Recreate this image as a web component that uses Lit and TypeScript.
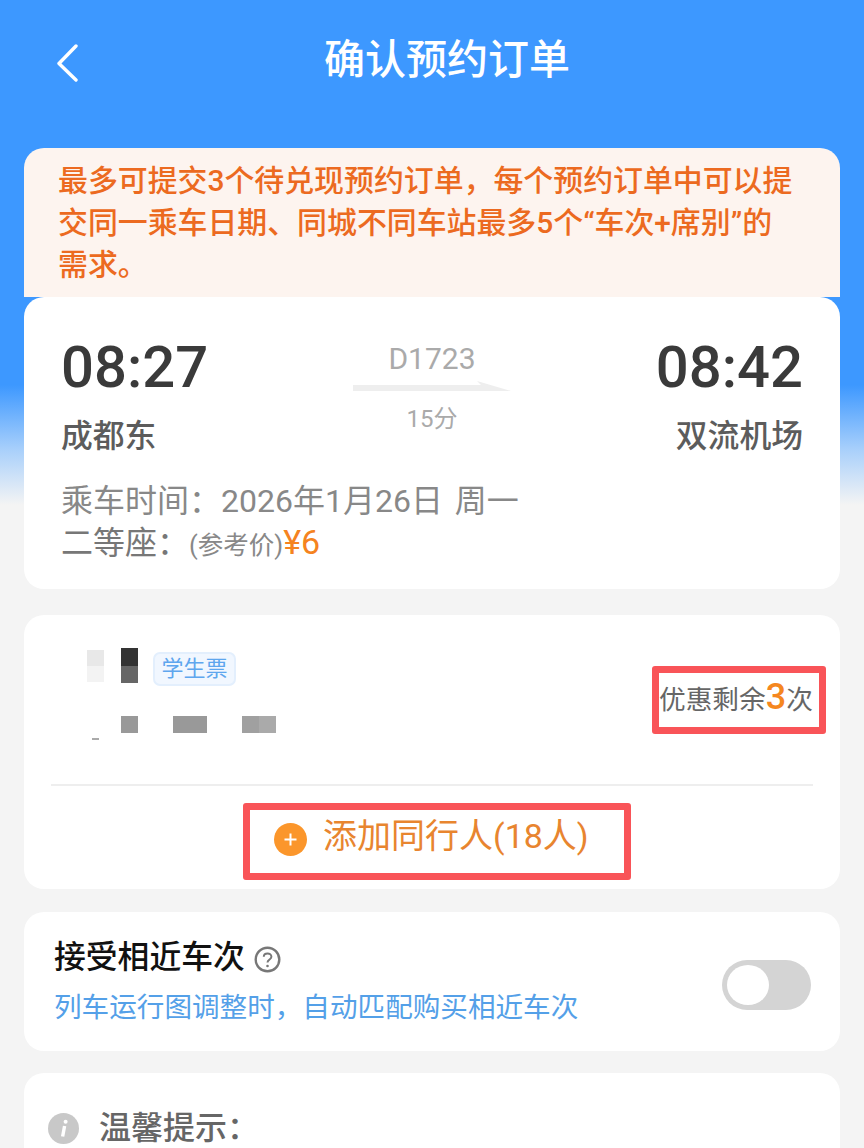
import { LitElement, html, css } from 'lit';
import { customElement } from 'lit/decorators.js';

@customElement('app-root')
export class AppRoot extends LitElement {
  static styles = css`
    :host {
      display: block;
      height: 1148px;
      overflow: hidden;
      font-family: Roboto, "Noto Sans CJK SC", sans-serif;
      background: linear-gradient(to bottom, #3d98ff 0, #3d98ff 385px, #a9d0fb 450px, #f4f4f4 505px);
    }

    .nav {
      height: 148px;
      box-sizing: border-box;
      padding: 33px 0 0 30px;
      position: relative;
      text-align: center;
      color: #fff;
      font-size: 41px;
      line-height: 54px;
      font-weight: 500;
    }

    .back {
      position: absolute;
      left: 56px;
      top: 44px;
      width: 24px;
      height: 38px;
    }

    .body {
      padding: 0 24px;
    }

    .notice {
      background: #fdf4ef;
      border-radius: 20px 20px 0 0;
      height: 149px;
      box-sizing: border-box;
      padding: 12px 45px 0 34px;
      color: #ec6a20;
      font-size: 29.9px;
      line-height: 42px;
      font-weight: 500;
    }

    .card {
      background: #fff;
      border-radius: 20px;
      box-sizing: border-box;
    }

    .ticket {
      height: 292px;
      padding: 34px 37px 0 37px;
    }

    .route {
      display: flex;
      justify-content: space-between;
    }

    .stop {
      width: 200px;
    }

    .stop.end {
      text-align: right;
    }

    .time {
      font-size: 58px;
      line-height: 72px;
      color: #3a3a3a;
      font-weight: 500;
    }

    .station {
      font-size: 31.8px;
      line-height: 44px;
      margin-top: 11px;
      color: #5c5c5c;
      font-weight: 500;
    }

    .train {
      display: flex;
      flex-direction: column;
      align-items: center;
      color: #aaa;
      padding-top: 8px;
    }

    .train-no {
      font-size: 30px;
      line-height: 40px;
    }

    .arrow {
      width: 158px;
      height: 10px;
      margin-top: 2px;
    }

    .duration {
      font-size: 24px;
      line-height: 32px;
      margin-top: 12px;
    }

    .date {
      font-size: 32px;
      line-height: 40px;
      word-spacing: 4px;
      color: #888;
      margin-top: 23px;
    }

    .seat {
      font-size: 32px;
      line-height: 42px;
      color: #777;
      margin-top: 0;
    }

    .seat small {
      font-size: 25.5px;
      color: #888;
    }

    .seat b {
      font-weight: 400;
      font-size: 34px;
      color: #f58320;
    }

    .passenger {
      margin-top: 26px;
      height: 274px;
      padding: 0 27px;
    }

    .person {
      height: 169px;
      border-bottom: 2px solid #eee;
      box-sizing: content-box;
      display: flex;
      justify-content: space-between;
    }

    .mosaic {
      padding: 33px 0 0 36px;
    }

    .mosaic-row {
      display: flex;
      align-items: flex-start;
    }

    .mosaic-row.second {
      margin-top: 30px;
    }

    .px {
      display: block;
      width: 17px;
      height: 17px;
    }

    .px-col {
      display: flex;
      flex-direction: column;
    }

    .tag {
      margin: 4px 0 0 15px;
      width: 83px;
      height: 34px;
      box-sizing: border-box;
      border: 2px solid #e3effd;
      border-radius: 7px;
      background: #f1f7ff;
      color: #5ea6ee;
      font-size: 22px;
      line-height: 30px;
      text-align: center;
    }

    .dash {
      display: block;
      width: 7px;
      height: 2px;
      margin: 5px 0 0 5px;
      background: #aaa;
    }

    .redbox {
      border: 7px solid #f95458;
      border-radius: 3px;
      box-sizing: border-box;
    }

    .quota {
      width: 174px;
      height: 68px;
      margin: 51px -13px 0 0;
      padding-bottom: 6px;
      display: flex;
      align-items: center;
      white-space: nowrap;
      font-size: 26.7px;
      color: #666;
    }

    .quota b {
      font-size: 36px;
      line-height: 40px;
      font-weight: 500;
      color: #f5871f;
    }

    .add-row {
      padding: 17px 0 0 192px;
    }

    .add {
      width: 388px;
      height: 77px;
      display: flex;
      align-items: center;
      padding: 0 0 11px 24px;
      gap: 16px;
      color: #e8852f;
      font-size: 34px;
      line-height: 40px;
    }

    .add svg {
      width: 33px;
      height: 33px;
      margin-top: 6px;
    }

    .option {
      margin-top: 23px;
      height: 139px;
      padding: 23px 29px 0 30px;
      display: flex;
      justify-content: space-between;
    }

    .option-title {
      display: flex;
      align-items: center;
      gap: 9px;
      font-size: 31.8px;
      line-height: 44px;
      color: #111;
      font-weight: 500;
    }

    .option-title svg {
      width: 27px;
      height: 27px;
      margin-top: 4px;
    }

    .option-sub {
      font-size: 27.6px;
      line-height: 38px;
      margin-top: 10px;
      color: #54a0e8;
    }

    .toggle {
      width: 89px;
      height: 50px;
      margin-top: 25px;
      border-radius: 25px;
      background: #d4d4d4;
      padding: 5px;
      box-sizing: border-box;
    }

    .knob {
      width: 42px;
      height: 40px;
      border-radius: 50%;
      background: #fff;
    }

    .tips {
      margin-top: 22px;
      height: 120px;
      padding: 35px 0 0 24px;
      display: flex;
      align-items: flex-start;
      gap: 20px;
      font-size: 32px;
      line-height: 40px;
      color: #666;
      font-weight: 500;
    }

    .tips svg {
      width: 31px;
      height: 31px;
      margin-top: 5px;
      flex: none;
    }
  `;

  render() {
    return html`
      <div class="nav">
        <svg class="back" viewBox="0 0 24 38" fill="none" stroke="#fff" stroke-width="3.4" stroke-linecap="round" stroke-linejoin="round">
          <path d="M20 2 L3 19.5 L20 36"></path>
        </svg>
        确认预约订单
      </div>

      <div class="body">
        <div class="notice">最多可提交3个待兑现预约订单，每个预约订单中可以提交同一乘车日期、同城不同车站最多5个“车次+席别”的需求。</div>

        <div class="card ticket">
          <div class="route">
            <div class="stop">
              <div class="time">08:27</div>
              <div class="station">成都东</div>
            </div>
            <div class="train">
              <div class="train-no">D1723</div>
              <svg class="arrow" viewBox="0 0 158 10"><path d="M0 4 H128 L124 0 L158 10 H0 Z" fill="#eee"></path></svg>
              <div class="duration">15分</div>
            </div>
            <div class="stop end">
              <div class="time">08:42</div>
              <div class="station">双流机场</div>
            </div>
          </div>
          <div class="date">乘车时间：2026年1月26日 周一</div>
          <div class="seat">二等座：<small>(参考价)</small><b>¥6</b></div>
        </div>

        <div class="card passenger">
          <div class="person">
            <div class="mosaic">
              <div class="mosaic-row">
                <span class="px-col" style="margin-top:2px">
                  <span class="px" style="background:#e8e8e8;height:16px"></span>
                  <span class="px" style="background:#f3f3f3;height:16px"></span>
                </span>
                <span class="px-col" style="margin-left:17px">
                  <span class="px" style="background:#333;height:18px"></span>
                  <span class="px" style="background:#666"></span>
                </span>
                <div class="tag">学生票</div>
              </div>
              <div class="mosaic-row second">
                <span class="px" style="margin-left:34px;background:#999"></span>
                <span class="px" style="margin-left:35px;width:34px;background:#999"></span>
                <span class="px" style="margin-left:35px;width:17px;background:#a0a0a0"></span>
                <span class="px" style="background:#aaa"></span>
              </div>
              <span class="dash"></span>
            </div>
            <div class="redbox quota">优惠剩余<b>3</b>次</div>
          </div>
          <div class="add-row">
            <div class="redbox add">
              <svg viewBox="0 0 33 33">
                <circle cx="16.5" cy="16.5" r="16.5" fill="#fb962b"></circle>
                <path d="M16.5 10.5 V22.5 M10.5 16.5 H22.5" stroke="#fff" stroke-width="2"></path>
              </svg>
              添加同行人(18人)
            </div>
          </div>
        </div>

        <div class="card option">
          <div>
            <div class="option-title">
              接受相近车次
              <svg viewBox="0 0 27 27" fill="none">
                <circle cx="13.5" cy="13.5" r="11.8" stroke="#777" stroke-width="2.4"></circle>
                <path d="M9.8 10.8 C9.8 6.4 17.4 6.4 17.4 10.8 C17.4 13.6 13.5 13.4 13.5 16.6" stroke="#777" stroke-width="2"></path>
                <circle cx="13.5" cy="20" r="1.3" fill="#777"></circle>
              </svg>
            </div>
            <div class="option-sub">列车运行图调整时，自动匹配购买相近车次</div>
          </div>
          <div class="toggle"><div class="knob"></div></div>
        </div>

        <div class="card tips">
          <svg viewBox="0 0 31 31">
            <circle cx="15.5" cy="15.5" r="15.5" fill="#c8c8c8"></circle>
            <path d="M16.6 13 L14.6 23.5" stroke="#fff" stroke-width="3.4"></path>
            <circle cx="17.6" cy="8.8" r="2" fill="#fff"></circle>
          </svg>
          温馨提示：
        </div>
      </div>
    `;
  }
}
